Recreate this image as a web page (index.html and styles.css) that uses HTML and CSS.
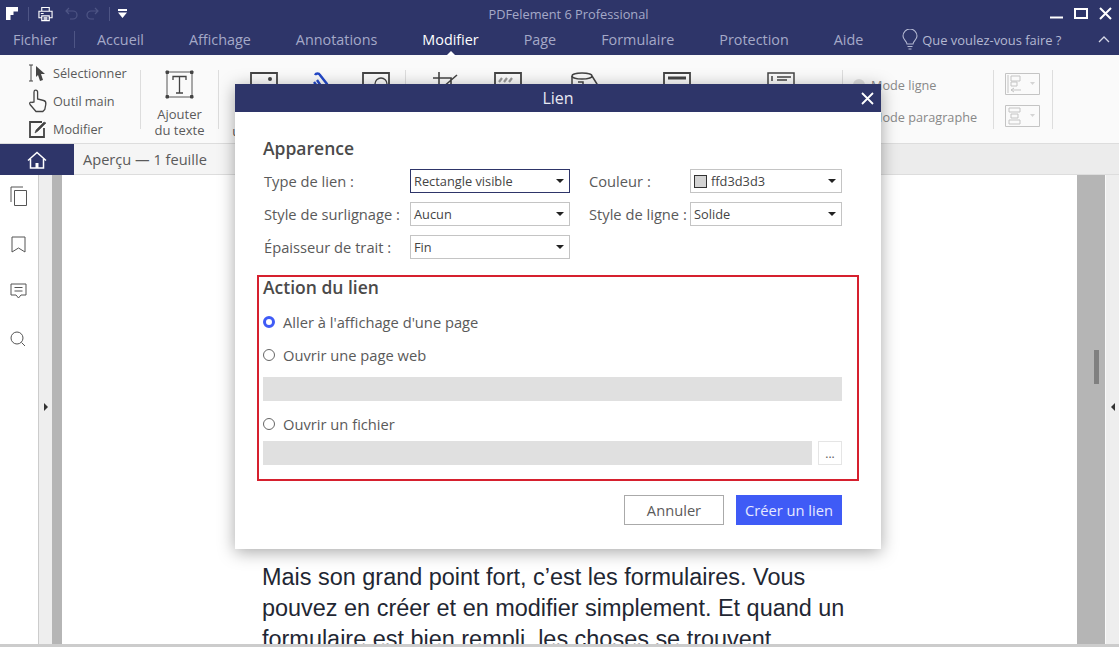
FILE: index.html
```html
<!DOCTYPE html>
<html lang="fr">
<head>
  <meta charset="UTF-8">
  <title>PDFelement 6 Professional</title>
  <link rel="stylesheet" href="styles.css">
</head>
<body>
<div class="app">

  <header class="topbar">
    <div class="title-row">
      <div class="quick">
        <svg class="q-logo" width="12" height="13" viewBox="0 0 12 13"><path d="M0 0h12v4.500h-4.500v3.500h-3v5h-4.500z" fill="#fff"/></svg>
        <span class="q-sep"></span>
        <svg class="q-print" width="15" height="16" viewBox="0 0 16 16" fill="none" stroke="#fff" stroke-width="1.200"><path d="M4 5V1h8v4M4 12H1V5h14v7h-3M4 10h8v5H4zM6 12h4M6 13.500h4M3 7.500h3"/></svg>
        <svg class="q-undo" width="13" height="13" viewBox="0 0 13 13" fill="none" stroke="#4e5585" stroke-width="1.200"><path d="M4 1 1 4l3 3M1 4h7a4 4 0 0 1 0 8H5"/></svg>
        <svg class="q-redo" width="13" height="13" viewBox="0 0 13 13" fill="none" stroke="#4e5585" stroke-width="1.200"><path d="M9 1l3 3-3 3M12 4H5a4 4 0 0 0 0 8h3"/></svg>
        <span class="q-sep q-sep-last"></span>
        <svg class="q-more" width="9" height="9" viewBox="0 0 9 9"><path d="M0 0h9v2H0zM0 3.500h9L4.500 9z" fill="#fff"/></svg>
      </div>
      <div class="app-title">PDFelement 6 Professional</div>
      <div class="win-btns">
        <svg width="13" height="13" viewBox="0 0 13 13"><path d="M0 9.500h13v2H0z" fill="#fff"/></svg>
        <svg width="14" height="13" viewBox="0 0 14 13" fill="none" stroke="#fff" stroke-width="2"><path d="M1 2h12v9H1z"/></svg>
        <svg width="13" height="13" viewBox="0 0 13 13" fill="none" stroke="#fff" stroke-width="2"><path d="M1 1l11 11M12 1 1 12"/></svg>
      </div>
    </div>
    <nav class="menu-row">
      <span class="menu-file">Fichier</span>
      <div class="menu-tabs">
        <span>Accueil</span>
        <span>Affichage</span>
        <span>Annotations</span>
        <span class="active">Modifier</span>
        <span>Page</span>
        <span>Formulaire</span>
        <span>Protection</span>
        <span>Aide</span>
      </div>
      <div class="ask">
        <svg width="16" height="21" viewBox="0 0 16 21" fill="none" stroke="#b4b8d2" stroke-width="1.100"><path d="M5 15c0-3-4-4-4-8a7 7 0 0 1 14 0c0 4-4 5-4 8zM5.500 17.500h5M6.500 20h3"/></svg>
        <span>Que voulez-vous faire ?</span>
      </div>
      <svg class="collapse" width="12" height="7" viewBox="0 0 12 7" fill="none" stroke="#d5d7e6" stroke-width="1.300"><path d="M1 6l5-5 5 5"/></svg>
    </nav>
  </header>

  <section class="ribbon">
    <div class="rb-tools">
      <div class="rb-line">
        <svg width="22" height="18" viewBox="0 0 22 18"><path d="M2 1h4M2 17h4M4 1v16" stroke="#444" stroke-width="1" fill="none"/><path d="M9 2l9 8h-4l2 6-3 1-2-6-2 2z" fill="#444"/></svg>
        <span>Sélectionner</span>
      </div>
      <div class="rb-line">
        <svg width="22" height="24" viewBox="0 0 22 24" fill="none" stroke="#444" stroke-width="1.300"><path d="M7 13V3a1.800 1.800 0 0 1 3.600 0v7l6 1.500c2 .5 2.500 2 2.200 4l-1 5-2 2H9l-6-7c-1-1.500 .5-3 2-2z"/></svg>
        <span>Outil main</span>
      </div>
      <div class="rb-line">
        <svg width="22" height="20" viewBox="0 0 22 20" fill="none" stroke="#444" stroke-width="1.800"><path d="M15 3H3v15h14v-9"/><path d="M8 14l1-3 8-8 2 1-8 8z" fill="#444" stroke-width=".6"/></svg>
        <span>Modifier</span>
      </div>
    </div>

    <div class="rb-big rb-text">
      <svg width="29" height="29" viewBox="0 0 29 29" fill="none" stroke="#444"><path d="M3 2h23M3 27h23M2 3v23M27 3v23" stroke-width=".9"/><path d="M1 1h2.500v2.500H1zM25.500 1H28v2.500h-2.500zM1 25.500h2.500V28H1zM25.500 25.500H28V28h-2.500z" fill="#444"/><path d="M8 10V6.500h13V10M14.500 6.500V23M11 23h7" stroke-width="1.300"/></svg>
      <span>Ajouter<br>du texte</span>
    </div>

    <div class="rb-objects">
      <div class="rb-big rb-image">
        <svg width="28" height="28" viewBox="0 0 28 28" fill="none" stroke="#444" stroke-width="1.800"><path d="M1 1h26v26H1z"/><circle cx="20" cy="7" r="2" fill="#444" stroke="none"/><path d="M1 20l7-7 6 6 4-3 9 8"/></svg>
        <span>Ajouter<br>une image</span>
      </div>
      <svg class="rb-link" width="16" height="32" viewBox="0 0 16 32" fill="none" stroke="#2348c8" stroke-width="2.400"><path d="M2 3c1-2 4-2 5 0l7 9c1 2 0 4-2 4s-3-1-4-2L4 8"/><path d="M1 10l8 11c2 2 5 2 6 0"/></svg>
      <svg class="rb-ocr" width="28" height="28" viewBox="0 0 28 28" fill="none" stroke="#444" stroke-width="1.800"><path d="M1 1h26v26H1z"/><circle cx="19" cy="12" r="6" stroke-width="1.300"/><path d="M1 18l6-5 5 4"/></svg>
    </div>

    <div class="rb-pages">
      <svg class="p-crop" width="26" height="28" viewBox="0 0 26 28" fill="none" stroke="#444" stroke-width="1.600"><path d="M6 0v18h16M0 6h18v18M2 22 24 3"/></svg>
      <svg class="p-mark" width="28" height="28" viewBox="0 0 28 28" fill="none" stroke="#444" stroke-width="1.800"><path d="M1 1h26v26H1z"/><path d="M5 10l3-4M10 10l3-4M15 10l3-4" stroke="#999" stroke-width="2.200"/></svg>
      <svg class="p-stamp" width="28" height="28" viewBox="0 0 28 28" fill="none" stroke="#444" stroke-width="1.500"><ellipse cx="12" cy="4" rx="10" ry="3"/><path d="M2 4v20h14M22 4l5 8v6M8 10h5v5"/></svg>
      <svg class="p-head" width="28" height="28" viewBox="0 0 28 28" fill="none" stroke="#444" stroke-width="1.800"><path d="M1 1h26v26H1z"/><path d="M5 6h18" stroke-width="3"/></svg>
      <svg class="p-num" width="28" height="28" viewBox="0 0 28 28" fill="none" stroke="#444" stroke-width="1.500"><path d="M1 1h26v26H1z"/><path d="M5 4v5M10 5h14M10 8h10"/></svg>
    </div>

    <div class="rb-modes">
      <div class="mode"><span class="mode-dot"></span><span>Mode ligne</span></div>
      <div class="mode"><span class="mode-dot mode-dot-off"></span><span>Mode paragraphe</span></div>
    </div>

    <div class="rb-aligns">
      <div class="align-btn">
        <svg width="35" height="22" viewBox="0 0 35 22" fill="none" stroke="#c4c4c4"><path d="M.5 .5h34v21H.5zM3 2v18M6 3h9v5H6zM6 9h6v4H6zM6 17h10M9 15l-3 2 3 2"/><path d="M25 9l2.500 3 2.500-3z" fill="#d4d4d4" stroke="none"/></svg>
      </div>
      <div class="align-btn">
        <svg width="35" height="22" viewBox="0 0 35 22" fill="none" stroke="#c4c4c4"><path d="M.5 .5h34v21H.5zM4 3h11v4H4zM6 9h7v4H6zM4 15h11v4H4z"/><path d="M25 9l2.500 3 2.500-3z" fill="#d4d4d4" stroke="none"/></svg>
      </div>
    </div>
  </section>

  <div class="tabs">
    <div class="home-tab">
      <svg width="20" height="18" viewBox="0 0 20 18" fill="none" stroke="#fff" stroke-width="1.500"><path d="M1 9.500 10 1.500l9 8M3.500 8v9h13V8"/><path d="M8.500 17v-5h3v5" fill="#fff" stroke="none"/></svg>
    </div>
    <div class="doc-tab">Aperçu — 1 feuille</div>
  </div>

  <main class="workspace">
    <aside class="sidebar">
      <svg width="17" height="20" viewBox="0 0 17 20" fill="none" stroke="#555"><path d="M4.500 4.500h12v15h-12zM1 16V1h12"/></svg>
      <svg width="15" height="17" viewBox="0 0 15 17" fill="none" stroke="#555"><path d="M1 1h13v15l-6.500-4L1 16z"/></svg>
      <svg width="17" height="16" viewBox="0 0 17 16" fill="none" stroke="#555"><path d="M1 1h15v11h-5l-2.500 3L6 12H1zM4.500 4.500h8M4.500 8h8"/></svg>
      <svg class="side-search" width="16" height="16" viewBox="0 0 16 16" fill="none" stroke="#555"><circle cx="7" cy="7" r="6"/><path d="M11.500 11.500 15 15"/></svg>
    </aside>
    <div class="strip">
      <span class="tri tri-right"></span>
    </div>
    <div class="gutter"></div>
    <article class="doc">
      <p>Mais son grand point fort, c’est les formulaires. Vous pouvez en créer et en modifier simplement. Et quand un formulaire est bien rempli, les choses se trouvent</p>
    </article>
    <div class="gutter gutter-right">
      <span class="thumb"></span>
    </div>
    <div class="strip strip-right">
      <span class="tri tri-left"></span>
    </div>
  </main>

  <div class="dialog">
    <div class="dialog-head">
      <span>Lien</span>
      <svg class="dialog-close" width="13" height="13" viewBox="0 0 13 13" fill="none" stroke="#fff" stroke-width="1.800"><path d="M1 1l11 11M12 1 1 12"/></svg>
    </div>
    <div class="dialog-body">
      <h3>Apparence</h3>
      <div class="form-grid">
        <label>Type de lien :</label>
        <div class="select focused"><span>Rectangle visible</span></div>
        <label>Couleur :</label>
        <div class="select"><span class="swatch"></span><span>ffd3d3d3</span></div>
        <label>Style de surlignage :</label>
        <div class="select"><span>Aucun</span></div>
        <label>Style de ligne :</label>
        <div class="select"><span>Solide</span></div>
        <label>Épaisseur de trait :</label>
        <div class="select"><span>Fin</span></div>
      </div>

      <div class="action-box">
        <h3>Action du lien</h3>
        <div class="radio-row first"><span class="radio on"></span>Aller à l'affichage d'une page</div>
        <div class="radio-row"><span class="radio"></span>Ouvrir une page web</div>
        <div class="field field-web"></div>
        <div class="radio-row radio-file"><span class="radio"></span>Ouvrir un fichier</div>
        <div class="file-row">
          <div class="field"></div>
          <button class="browse">...</button>
        </div>
      </div>

      <div class="dialog-foot">
        <button class="btn">Annuler</button>
        <button class="btn btn-primary">Créer un lien</button>
      </div>
    </div>
  </div>

  <div class="bottom-edge"></div>
</div>
</body>
</html>
```

FILE: styles.css
```css
* {
  box-sizing: border-box;
}
html, body {
  margin: 0;
  height: 100%;
  overflow: hidden;
}
body {
  font-family: "Open Sans", sans-serif;
  font-size: 14.700px;
  color: #5a5a5a;
}
svg {
  display: block;
  flex: none;
}
.app {
  position: relative;
  display: flex;
  flex-direction: column;
  height: 647px;
  overflow: hidden;
}

/* title bar + menu */
.topbar {
  background-color: #2e3569;
  height: 55px;
  flex: none;
}
.title-row {
  display: grid;
  grid-template-columns: 1fr auto 1fr;
  align-items: center;
  height: 27px;
}
.quick {
  display: flex;
  align-items: center;
  padding-left: 6px;
}
.q-sep {
  width: 1px;
  height: 14px;
  background-color: #4e5585;
  margin-left: 10px;
}
.q-print {
  margin-left: 9px;
}
.q-undo {
  margin-left: 12px;
}
.q-redo {
  margin-left: 8px;
}
.q-sep-last {
  margin-left: 10px;
}
.q-more {
  margin-left: 8px;
}
.app-title {
  margin-left: 18px;
  font-size: 12.800px;
  color: #a5a9c8;
}
.win-btns {
  display: flex;
  justify-content: flex-end;
  gap: 11px;
  padding-right: 7px;
  align-items: center;
}
.menu-row {
  display: flex;
  align-items: center;
  height: 28px;
  padding-left: 13px;
  padding-bottom: 3px;
  font-size: 14.360px;
  color: #a5a9c8;
}
.menu-file {
  width: 62px;
  margin-right: 22px;
  border-right: 1px solid #4e5585;
  line-height: 17px;
}
.menu-tabs {
  display: flex;
  gap: 45px;
}
.menu-tabs .active {
  position: relative;
  color: #fff;
}
.menu-tabs .active:after {
  content: "";
  position: absolute;
  left: 24px;
  bottom: -7px;
  border-left: 5px solid transparent;
  border-right: 5px solid transparent;
  border-bottom: 5px solid #fff;
}
.ask {
  display: flex;
  align-items: center;
  gap: 4px;
  margin-left: 39px;
  font-size: 12.900px;
  color: #b4b8d2;
}
.collapse {
  margin-left: 37px;
}

/* ribbon */
.ribbon {
  display: flex;
  flex: none;
  height: 89px;
  padding-top: 15px;
  background-color: #fafafa;
  border-bottom: 1px solid #ddd;
  font-size: 13px;
  color: #5a5a5a;
}
.rb-tools {
  width: 141px;
  height: 59px;
  padding-left: 27px;
  border-right: 1px solid #ddd;
}
.rb-line {
  display: flex;
  align-items: center;
  gap: 4px;
  height: 28px;
  font-size: 12.700px;
  white-space: nowrap;
}
.rb-line:first-child {
  margin-top: -11px;
}
.rb-big {
  display: flex;
  flex-direction: column;
  align-items: center;
  text-align: center;
  line-height: 16px;
}
.rb-big span {
  margin-top: 7px;
}
.rb-text {
  width: 78px;
  height: 59px;
  border-right: 1px solid #ddd;
}
.rb-objects {
  display: flex;
  width: 187px;
  height: 59px;
  padding-top: 2px;
  align-items: flex-start;
  border-right: 1px solid #ddd;
}
.rb-image {
  width: 90px;
  white-space: nowrap;
}
.rb-link {
  margin-left: 4px;
}
.rb-ocr {
  margin-left: 33px;
}
.rb-pages {
  display: flex;
  align-items: flex-start;
  width: 437px;
  height: 59px;
  padding: 2px 0 0 27px;
  border-right: 1px solid #ddd;
}
.p-mark {
  margin-left: 35px;
}
.p-stamp {
  margin-left: 48px;
}
.p-head {
  margin-left: 65px;
}
.p-num {
  margin-left: 76px;
}
.rb-modes {
  width: 151px;
  height: 59px;
  padding-left: 10px;
  font-size: 12.700px;
  color: #888;
  border-right: 1px solid #ddd;
}
.mode {
  display: flex;
  align-items: center;
  gap: 6px;
  height: 32px;
  white-space: nowrap;
}
.mode:first-child {
  margin-top: -1px;
}
.mode-dot {
  width: 12px;
  height: 12px;
  border-radius: 50%;
  background-color: #ddd;
}
.mode-dot-off {
  background-color: #eee;
}
.rb-aligns {
  display: flex;
  flex-direction: column;
  gap: 10px;
  width: 59px;
  height: 59px;
  padding: 3px 0 0 11px;
  border-right: 1px solid #ddd;
}

/* document tab row */
.tabs {
  display: flex;
  flex: none;
  height: 31px;
  background-color: #ececec;
  border-bottom: 1px solid #ddd;
}
.home-tab {
  display: flex;
  align-items: center;
  justify-content: center;
  width: 74px;
  height: 31px;
  background-color: #2e3569;
}
.doc-tab {
  width: 200px;
  padding-left: 9px;
  font-size: 14.600px;
  line-height: 30px;
  background-color: #f5f5f5;
}

/* workspace */
.workspace {
  display: flex;
  flex: 1;
  min-height: 0;
}
.sidebar {
  display: flex;
  flex-direction: column;
  align-items: center;
  width: 39px;
  padding: 11px 2px 0 0;
  gap: 30px;
  border-right: 1px solid #ccc;
  background-color: #fff;
}
.side-search {
  margin-top: 2px;
}
.strip {
  position: relative;
  display: flex;
  align-items: center;
  justify-content: center;
  width: 13px;
  background-color: #eee;
  padding-bottom: 8px;
}
.strip-right {
  width: 14px;
  border-left: 1px solid #fafafa;
}
.tri {
  width: 0;
  height: 0;
  border-top: 4px solid transparent;
  border-bottom: 4px solid transparent;
}
.tri-right {
  border-left: 4px solid #333;
}
.tri-left {
  border-right: 4px solid #333;
}
.gutter {
  width: 10px;
  background-color: #b5b5b5;
}
.gutter-right {
  display: flex;
  justify-content: flex-end;
  width: 28px;
  padding: 175px 6px 0 0;
}
.thumb {
  width: 5px;
  height: 34px;
  background-color: #808080;
}
.doc {
  flex: 1;
  min-width: 0;
  padding: 387px 0 0 200px;
  background-color: #fff;
  overflow: hidden;
}
.doc p {
  width: 590px;
  margin: 0;
  font-family: "Liberation Sans", Arial, sans-serif;
  font-size: 23.450px;
  line-height: 31px;
  color: #1f2733;
}
.bottom-edge {
  position: absolute;
  left: 0;
  right: 0;
  bottom: 0;
  height: 3px;
  background-color: #ccc;
}

/* dialog */
.dialog {
  position: absolute;
  top: 84px;
  left: 235px;
  width: 646px;
  height: 465px;
  background-color: #fff;
  box-shadow: 0 3px 16px rgba(0, 0, 0, .35);
}
.dialog-head {
  position: relative;
  height: 28px;
  line-height: 28px;
  text-align: center;
  font-size: 16px;
  color: #e8e9f2;
  background-color: #2e3569;
}
.dialog-close {
  position: absolute;
  top: 8px;
  right: 7px;
}
.dialog-body {
  padding: 25px 39px 0 28px;
}
.dialog-body h3 {
  margin: 0;
  font-size: 17.500px;
  font-weight: 600;
  line-height: 22px;
  color: #4a4a4a;
}
.form-grid {
  display: grid;
  grid-template-columns: 147px 160px 120px 152px;
  grid-auto-rows: 24px;
  row-gap: 9px;
  margin-top: 10px;
  align-items: center;
}
.form-grid label {
  padding-left: 1px;
  white-space: nowrap;
}
.form-grid label:nth-of-type(even) {
  padding-left: 19px;
}
.select {
  position: relative;
  display: flex;
  align-items: center;
  gap: 4px;
  height: 24px;
  padding-left: 3px;
  font-size: 12.800px;
  color: #444;
  border: 1px solid #c4c4c4;
}
.select:after {
  content: "";
  position: absolute;
  right: 5px;
  top: 9px;
  border-left: 4px solid transparent;
  border-right: 4px solid transparent;
  border-top: 4px solid #222;
}
.select.focused {
  border-color: #2e3569;
}
.swatch {
  width: 13px;
  height: 13px;
  background-color: #d3d3d3;
  border: 1px solid #333;
}

.action-box {
  width: 602px;
  height: 206px;
  margin: 16px 0 0 -6px;
  padding: 0 15px 0 4px;
  border: 2px solid #d6202e;
}
.action-box h3 {
  margin-top: -1px;
}
.radio-row {
  display: flex;
  align-items: center;
  gap: 8px;
  height: 20px;
  margin-top: 13px;
}
.radio-row.first {
  margin-top: 14px;
}
.radio {
  width: 12px;
  height: 12px;
  border: 1px solid #666;
  border-radius: 50%;
}
.radio.on {
  border: 3px solid #3f5bf6;
}
.field {
  flex: 1;
  height: 24px;
  background-color: #e0e0e0;
}
.field-web {
  margin-top: 12px;
}
.radio-file {
  margin-top: 13px;
}
.file-row {
  display: flex;
  gap: 6px;
  margin-top: 7px;
}
.browse {
  width: 24px;
  height: 24px;
  padding: 0;
  font-family: inherit;
  font-size: 12px;
  color: #5a5a5a;
  background-color: #fff;
  border: 1px solid #e5e5e5;
}
.dialog-foot {
  display: flex;
  justify-content: flex-end;
  gap: 12px;
  margin-top: 14px;
}
.btn {
  width: 100px;
  height: 30px;
  padding: 0;
  font-family: inherit;
  font-size: 14.700px;
  color: #5a5a5a;
  background-color: #fff;
  border: 1px solid #aaa;
}
.btn-primary {
  width: 106px;
  color: #e6e9ff;
  background-color: #3f5bf6;
  border-color: #3f5bf6;
}
```
